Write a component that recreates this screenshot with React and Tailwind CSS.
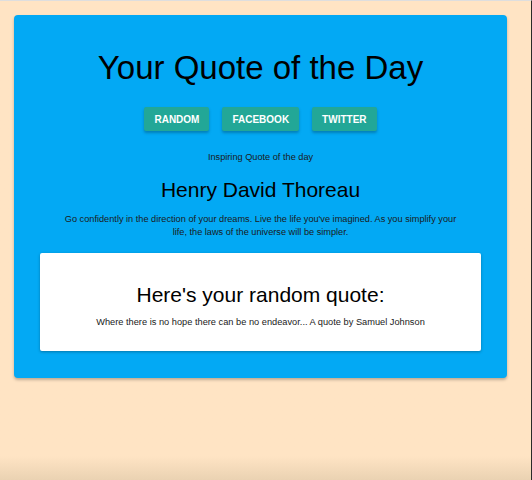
const Btn = ({ children }) => (
  <button className="h-[24px] px-[10px] bg-[#22a797] text-white text-[10px] font-bold uppercase rounded-[2px] shadow-[0_2px_3px_rgba(0,0,0,0.25)]">
    {children}
  </button>
);

export default function App() {
  return (
    <div className="h-[480px] bg-[#ffe4c4] border-t border-[#dedede] border-r border-r-[#2a2a2a] pt-[14px] pl-[14px] font-['Liberation_Sans',Arial,sans-serif] bg-gradient-to-b from-[#ffe4c4] from-[95%] to-[#ead2b2]">
      <div className="w-[493px] bg-[#03a9f4] rounded-[4px] shadow-[0_2px_3px_rgba(0,0,0,0.25)] pt-[33px] pb-[27px] px-[26px] flex flex-col items-center text-center">
        <h1 className="text-[33px] leading-[40px] text-black">Your Quote of the Day</h1>
        <div className="flex gap-[13px] mt-[19px]">
          <Btn>Random</Btn>
          <Btn>Facebook</Btn>
          <Btn>Twitter</Btn>
        </div>
        <p className="mt-[20px] text-[9.2px] leading-[12px] text-[#1a1a1a]">Inspiring Quote of the day</p>
        <h2 className="mt-[14px] text-[21px] leading-[26px] text-black">Henry David Thoreau</h2>
        <p className="mt-[10px] max-w-[405px] text-[9.2px] leading-[13px] text-[#1a1a1a]">
          Go confidently in the direction of your dreams. Live the life you've imagined. As you simplify your life, the laws of the universe will be simpler.
        </p>
        <div className="mt-[14px] w-full bg-white rounded-[2px] shadow-[0_1px_3px_rgba(0,0,0,0.3)] pt-[28px] pb-[23px]">
          <h3 className="text-[21px] leading-[27px] text-black">Here's your random quote:</h3>
          <p className="mt-[8px] text-[9.25px] leading-[12px] text-[#1a1a1a]">
            Where there is no hope there can be no endeavor... A quote by Samuel Johnson
          </p>
        </div>
      </div>
    </div>
  );
}
